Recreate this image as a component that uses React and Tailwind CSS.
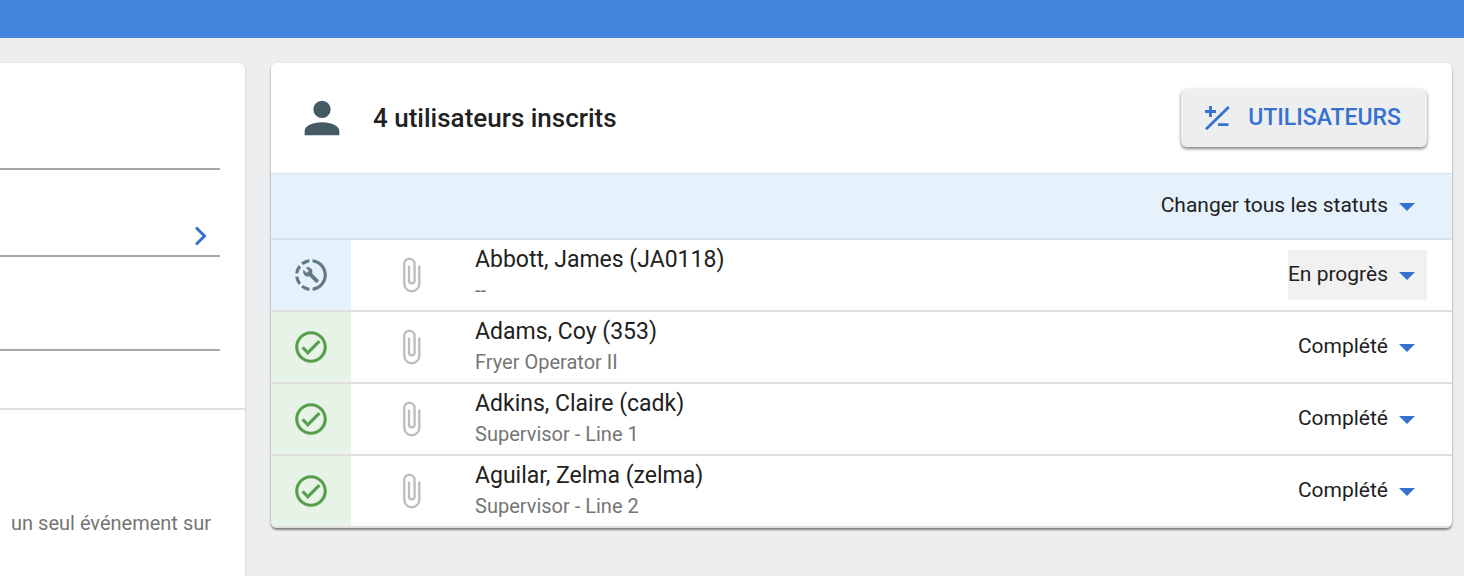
import React, { useState } from "react";

const ICONS = {
  account:
    "M12,4A4,4 0 0,1 16,8A4,4 0 0,1 12,12A4,4 0 0,1 8,8A4,4 0 0,1 12,4M12,14C16.42,14 20,15.79 20,18V20H4V18C4,15.79 7.58,14 12,14Z",
  paperclip:
    "M16.5,6V17.5A4,4 0 0,1 12.5,21.5A4,4 0 0,1 8.5,17.5V5A2.5,2.5 0 0,1 11,2.5A2.5,2.5 0 0,1 13.5,5V15.5A1,1 0 0,1 12.5,16.5A1,1 0 0,1 11.5,15.5V6H10V15.5A2.5,2.5 0 0,0 12.5,18A2.5,2.5 0 0,0 15,15.5V5A4,4 0 0,0 11,1A4,4 0 0,0 7,5V17.5A5.5,5.5 0 0,0 12.5,23A5.5,5.5 0 0,0 18,17.5V6H16.5Z",
  check:
    "M12 2C6.5 2 2 6.5 2 12S6.5 22 12 22 22 17.5 22 12 17.5 2 12 2M12 20C7.59 20 4 16.41 4 12S7.59 4 12 4 20 7.59 20 12 16.41 20 12 20M16.59 7.58L10 14.17L7.41 11.59L6 13L10 17L18 9L16.59 7.58Z",
  wrench:
    "M13,2.03V2.05L13,4.05C17.39,4.59 20.5,8.58 19.96,12.97C19.5,16.61 16.64,19.5 13,19.93V21.93C18.5,21.38 22.5,16.5 21.95,11C21.5,6.25 17.73,2.5 13,2.03M11,2.06C9.05,2.25 7.19,3 5.67,4.26L7.1,5.74C8.22,4.84 9.57,4.26 11,4.06V2.06M4.26,5.67C3,7.19 2.25,9.04 2.05,11H4.05C4.24,9.58 4.8,8.23 5.69,7.1L4.26,5.67M2.06,13C2.26,14.96 3.03,16.81 4.27,18.33L5.69,16.9C4.81,15.77 4.24,14.42 4.06,13H2.06M7.1,18.37L5.67,19.74C7.18,21 9.04,21.79 11,22V20C9.58,19.82 8.23,19.25 7.1,18.37M16.82,15.19L12.71,11.08C13.12,10.04 12.89,8.82 12.03,7.97C11.13,7.06 9.78,6.88 8.69,7.38L10.63,9.32L9.28,10.68L7.29,8.73C6.75,9.82 7,11.17 7.88,12.08C8.74,12.94 9.96,13.16 11,12.76L15.11,16.86C15.29,17.05 15.56,17.05 15.74,16.86L16.78,15.83C17,15.65 17,15.33 16.82,15.19Z",
};

const USERS = [
  { id: "JA0118", name: "Abbott, James (JA0118)", role: "--", status: "progress" },
  { id: "353", name: "Adams, Coy (353)", role: "Fryer Operator II", status: "done" },
  { id: "cadk", name: "Adkins, Claire (cadk)", role: "Supervisor - Line 1", status: "done" },
  { id: "zelma", name: "Aguilar, Zelma (zelma)", role: "Supervisor - Line 2", status: "done" },
];

function Icon({ name, className }) {
  return (
    <svg viewBox="0 0 24 24" className={className} fill="currentColor" aria-hidden="true">
      <path d={ICONS[name]} />
    </svg>
  );
}

function StatusSelect({ label, value, onChange, className = "", children }) {
  return (
    <div className={`relative ${className}`}>
      <select
        aria-label={label}
        value={value}
        onChange={(e) => onChange(e.target.value)}
        className="block h-[50px] appearance-none [field-sizing:content] bg-transparent pr-[39px] pb-px text-[21px] text-[#212121] outline-none"
      >
        {children}
      </select>
      <svg
        viewBox="0 0 16 8"
        className="pointer-events-none absolute right-3 top-[22px] h-2 w-4 text-[#3572cf]"
        fill="currentColor"
        aria-hidden="true"
      >
        <path d="M0 0h16L8 8z" />
      </svg>
    </div>
  );
}

function SidePanel() {
  return (
    <aside className="w-[245px] shrink-0 rounded-tr-md bg-white shadow-[0_1px_3px_rgba(0,0,0,0.2)]">
      <div className="border-b-2 border-[#e0e0e0] pr-[25px] pb-[57px]">
        <input aria-label="Titre" className="block h-[107px] w-full border-b-2 border-[#a6a6a6] outline-none" />
        <div className="flex h-[87px] items-end border-b-2 border-[#a6a6a6]">
          <input aria-label="Formation" className="h-10 min-w-0 flex-1 outline-none" />
          <button aria-label="Ouvrir" className="mr-3 mb-2 p-0 text-[#3572cf]">
            <svg viewBox="0 0 14 22" className="h-[22px] w-[14px]" fill="none" stroke="currentColor" strokeWidth="3">
              <path d="M2 2.5l8.500 8.500L2 19.500" />
            </svg>
          </button>
        </div>
        <input aria-label="Date" className="block h-[94px] w-full border-b-2 border-[#a6a6a6] outline-none" />
      </div>
      <p className="pt-[99px] pr-[34px] text-right text-xl leading-7 whitespace-nowrap text-[#757575]">
        un seul événement sur
      </p>
    </aside>
  );
}

function UserRow({ user, active, onStatus }) {
  const done = user.status === "done";
  return (
    <li className="flex h-[72px] items-stretch border-b-2 border-[#e0e0e0]">
      <div
        className={`flex w-20 shrink-0 items-center justify-center ${
          done ? "bg-[#e8f3e7] text-[#579e4c]" : "bg-[#e5f2fc] text-[#637a86]"
        }`}
      >
        <Icon name={done ? "check" : "wrench"} className="size-[38px]" />
      </div>
      <div className="flex w-[124px] shrink-0 items-center justify-center pr-1 text-[#bdbdbd]">
        <Icon name="paperclip" className="size-[38px]" />
      </div>
      <div className="min-w-0 flex-1 pt-1">
        <div className="truncate text-[23px] leading-8 text-[#212121]">{user.name}</div>
        <div className="truncate text-xl leading-7 text-[#757575]">{user.role}</div>
      </div>
      <StatusSelect
        label={`Statut de ${user.name}`}
        value={user.status}
        onChange={onStatus}
        className={`mr-[25px] self-center ${active ? "bg-[#f1f1f1]" : ""}`}
      >
        <option value="progress">En progrès</option>
        <option value="done">Complété</option>
      </StatusSelect>
    </li>
  );
}

export default function App() {
  const [users, setUsers] = useState(USERS);

  const setStatus = (id, status) =>
    setUsers((list) => list.map((u) => (u.id === id ? { ...u, status } : u)));
  const setAll = (status) => setUsers((list) => list.map((u) => ({ ...u, status })));

  return (
    <div className="flex min-h-screen flex-col bg-[#edeef0] font-['Roboto',sans-serif]">
      <header className="h-[38px] bg-[#4486de]" />
      <main className="flex flex-1 gap-[26px] pt-[25px] pr-3">
        <SidePanel />

        <section className="min-w-0 flex-1 self-start overflow-hidden rounded-md bg-white shadow-[0_2px_2px_rgba(0,0,0,0.4),0_1px_3px_rgba(0,0,0,0.15)]">
          <div className="flex h-[111px] items-center border-b border-[#e0e0e0] pr-[25px] pl-[25px]">
            <Icon name="account" className="size-[52px] text-[#455a64]" />
            <h2 className="ml-[25px] flex-1 pt-px text-[26px] font-medium text-[#212121]">
              {users.length} utilisateurs inscrits
            </h2>
            <button className="flex h-[58px] items-center gap-[18px] rounded-md bg-[#edeef0] px-[26px] pl-6 text-[23px] font-medium text-[#3572cf] shadow-[0_2px_3px_rgba(0,0,0,0.4),0_1px_4px_rgba(0,0,0,0.15)]">
              <svg viewBox="0 0 25 24" className="h-6 w-[25px]" fill="none" stroke="currentColor" strokeWidth="2.8" aria-hidden="true">
                <path d="M0 5.500h11M5.500 0v11M13 18.700h10.500M1 23.200L23.800 1" />
              </svg>
              UTILISATEURS
            </button>
          </div>

          <div className="flex h-[66px] items-center justify-end border-b-2 border-[#d6e1ea] bg-[#e5f2fc] pr-[25px]">
            <StatusSelect label="Changer tous les statuts" value="" onChange={setAll}>
              <option value="" hidden>
                Changer tous les statuts
              </option>
              <option value="progress">En progrès</option>
              <option value="done">Complété</option>
            </StatusSelect>
          </div>

          <ul>
            {users.map((u, i) => (
              <UserRow key={u.id} user={u} active={i === 0} onStatus={(s) => setStatus(u.id, s)} />
            ))}
          </ul>
        </section>
      </main>
    </div>
  );
}
